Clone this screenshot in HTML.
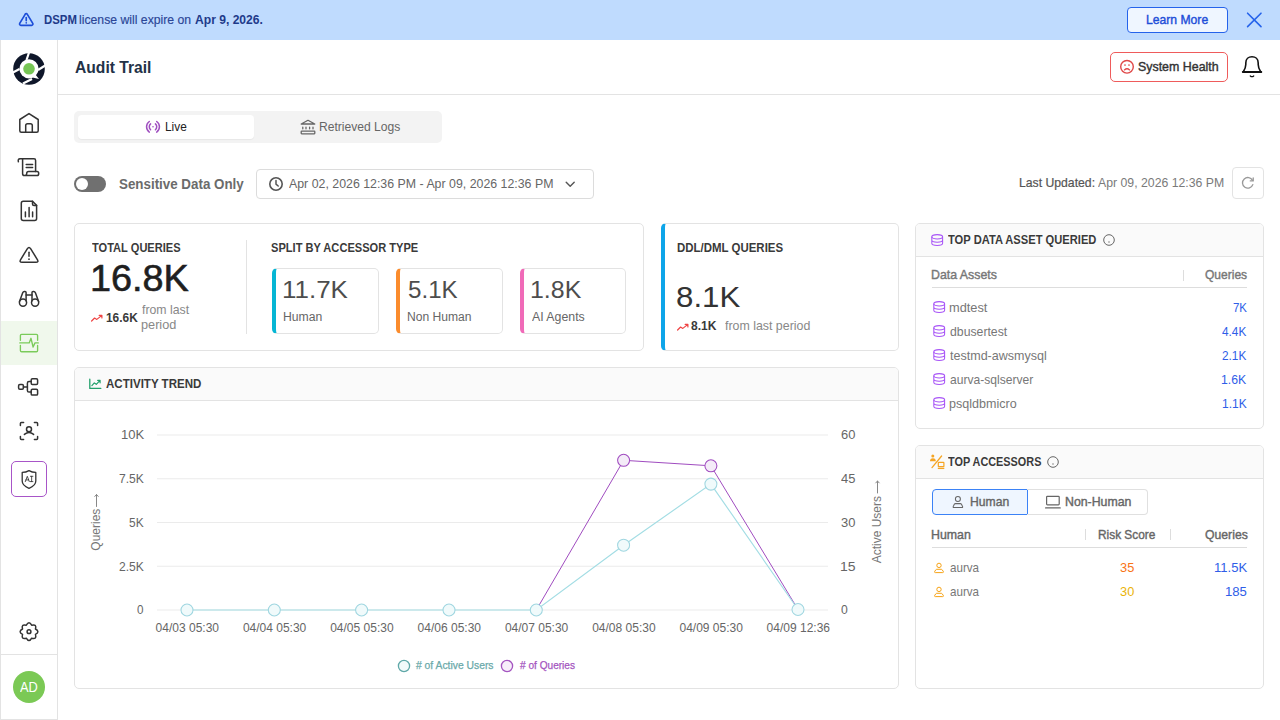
<!DOCTYPE html>
<html><head><meta charset="utf-8"><title>Audit Trail</title>
<style>
html,body{margin:0;padding:0;width:1280px;height:720px;overflow:hidden;background:#fff;}
body{position:relative;font-family:"Liberation Sans",sans-serif;}
.t{position:absolute;white-space:nowrap;transform-origin:0 0;}
.b{position:absolute;box-sizing:border-box;}
.s{position:absolute;overflow:visible;}
</style></head><body>
<div class="b" style="left:0px;top:0px;width:1280px;height:40px;background:#bfdbfe;"></div>
<div class="t" style="left:43.88px;top:13px;font-size:13px;line-height:13px;font-weight:700;color:#1e3a8a;transform:scaleX(0.8750);">DSPM</div>
<div class="t" style="left:79.31px;top:13px;font-size:13px;line-height:13px;font-weight:400;color:#2a4596;transform:scaleX(0.9407);-webkit-text-stroke:0.15px currentColor;">license will expire on</div>
<div class="t" style="left:195.00px;top:13px;font-size:13px;line-height:13px;font-weight:700;color:#1e3a8a;transform:scaleX(0.9306);">Apr 9, 2026.</div>
<div class="b" style="left:1127px;top:7px;width:101px;height:26px;background:#eff6ff;border:1px solid #2563eb;border-radius:4px;"></div>
<div class="t" style="left:1145.86px;top:13px;font-size:13px;line-height:13px;font-weight:400;color:#1d4ed8;transform:scaleX(0.9354);-webkit-text-stroke:0.4px currentColor;">Learn More</div>
<div class="b" style="left:0px;top:40px;width:58px;height:680px;border:1px solid #e3e3e3;border-top:none;background:#fff;"></div>
<svg class="s" style="left:13px;top:53px;" width="32" height="32" viewBox="0 0 32 32" fill="none"><circle cx="16" cy="16" r="15.8" fill="#0f172a"/>
<g stroke="#fff" stroke-width="2.2">
<path d="M13.5 7 L16.2 -1"/><path d="M25 17 L33 12"/><path d="M19 26 L10 30.5"/><path d="M6.5 16 L-1 20"/>
</g>
<circle cx="16" cy="15.8" r="9.6" fill="#fff"/>
<path d="M22 21 L26 26 L19.5 24.5 Z" fill="#fff"/>
<circle cx="16" cy="15.8" r="5.8" fill="#76c555"/></svg>
<div class="b" style="left:1px;top:321px;width:56px;height:44px;background:#f0f8ec;"></div>
<div class="b" style="left:11px;top:461px;width:36px;height:36px;border:1px solid #a855c8;border-radius:5px;"></div>
<div class="b" style="left:1px;top:654px;width:56px;height:1px;background:#e3e3e3;"></div>
<div class="b" style="left:13px;top:671px;width:32px;height:32px;border-radius:50%;background:#7bc955;"></div>
<div class="t" style="left:19.90px;top:680px;font-size:14px;line-height:14px;font-weight:400;color:#fff;transform:scaleX(0.9158);">AD</div>
<div class="b" style="left:58px;top:94px;width:1222px;height:1px;background:#e3e3e3;"></div>
<div class="t" style="left:75.00px;top:59px;font-size:17px;line-height:17px;font-weight:700;color:#233247;transform:scaleX(0.9195);">Audit Trail</div>
<div class="b" style="left:1110px;top:52px;width:118px;height:30px;border:1px solid #ef5b5b;border-radius:5px;"></div>
<div class="t" style="left:1138.45px;top:60px;font-size:13px;line-height:13px;font-weight:400;color:#333;transform:scaleX(0.9542);-webkit-text-stroke:0.4px currentColor;">System Health</div>
<div class="b" style="left:74px;top:111px;width:368px;height:32px;background:#f3f3f3;border-radius:5px;"></div>
<div class="b" style="left:78px;top:115px;width:176px;height:24px;background:#fff;border-radius:4px;box-shadow:0 1px 1px rgba(0,0,0,0.05);"></div>
<div class="t" style="left:164.59px;top:120px;font-size:13px;line-height:13px;font-weight:400;color:#222;transform:scaleX(0.9130);">Live</div>
<div class="t" style="left:319.07px;top:120px;font-size:13px;line-height:13px;font-weight:400;color:#666;transform:scaleX(0.9302);">Retrieved Logs</div>
<div class="b" style="left:74px;top:176px;width:32px;height:16px;background:#707070;border-radius:8px;"></div>
<div class="b" style="left:76px;top:178px;width:12px;height:12px;border-radius:50%;background:#fff;"></div>
<div class="t" style="left:118.60px;top:177px;font-size:14px;line-height:14px;font-weight:700;color:#6b6b6b;transform:scaleX(0.9542);">Sensitive Data Only</div>
<div class="b" style="left:256px;top:169px;width:338px;height:30px;border:1px solid #dcdcdc;border-radius:4px;"></div>
<div class="t" style="left:288.75px;top:177px;font-size:13px;line-height:13px;font-weight:400;color:#666;transform:scaleX(0.9505);">Apr 02, 2026 12:36 PM - Apr 09, 2026 12:36 PM</div>
<div class="t" style="left:1019.36px;top:176px;font-size:13px;line-height:13px;font-weight:400;color:#555;transform:scaleX(0.9392);-webkit-text-stroke:0.2px currentColor;">Last Updated:</div>
<div class="t" style="left:1098.00px;top:176px;font-size:13px;line-height:13px;font-weight:400;color:#7a7a7a;transform:scaleX(0.9444);">Apr 09, 2026 12:36 PM</div>
<div class="b" style="left:1232px;top:167px;width:32px;height:32px;border:1px solid #e3e3e3;border-radius:4px;"></div>
<div class="b" style="left:74px;top:223px;width:570px;height:128px;border:1px solid #e3e3e3;border-radius:5px;"></div>
<div class="t" style="left:91.80px;top:242px;font-size:12px;line-height:12px;font-weight:700;color:#3a3a3a;transform:scaleX(0.9229);">TOTAL QUERIES</div>
<div class="t" style="left:90.30px;top:261px;font-size:36px;line-height:36px;font-weight:400;color:#1f1f1f;transform:scaleX(1.0500);-webkit-text-stroke:0.6px currentColor;">16.8K</div>
<div class="t" style="left:105.60px;top:311px;font-size:13px;line-height:13px;font-weight:700;color:#3a3a3a;transform:scaleX(0.9143);">16.6K</div>
<div class="t" style="left:142.30px;top:303px;font-size:13px;line-height:13px;font-weight:400;color:#888;transform:scaleX(0.9440);">from last</div>
<div class="t" style="left:141.32px;top:318px;font-size:13px;line-height:13px;font-weight:400;color:#888;transform:scaleX(0.9771);">period</div>
<div class="b" style="left:246px;top:240px;width:1px;height:94px;background:#e3e3e3;"></div>
<div class="t" style="left:270.80px;top:242px;font-size:12px;line-height:12px;font-weight:700;color:#3a3a3a;transform:scaleX(0.9239);">SPLIT BY ACCESSOR TYPE</div>
<div class="b" style="left:272px;top:268px;width:107px;height:66px;border:1px solid #e3e3e3;border-left:4px solid #06b6d4;border-radius:5px;"></div>
<div class="t" style="left:281.84px;top:278px;font-size:24px;line-height:24px;font-weight:400;color:#4d4d4d;transform:scaleX(1.0814);">11.7K</div>
<div class="t" style="left:283.03px;top:311px;font-size:12.5px;line-height:12.5px;font-weight:400;color:#666;transform:scaleX(0.9744);">Human</div>
<div class="b" style="left:396px;top:268px;width:107px;height:66px;border:1px solid #e3e3e3;border-left:4px solid #fb8c2d;border-radius:5px;"></div>
<div class="t" style="left:407.69px;top:278px;font-size:24px;line-height:24px;font-weight:400;color:#4d4d4d;transform:scaleX(1.0063);">5.1K</div>
<div class="t" style="left:406.93px;top:311px;font-size:12.5px;line-height:12.5px;font-weight:400;color:#666;transform:scaleX(0.9677);">Non Human</div>
<div class="b" style="left:520px;top:268px;width:106px;height:66px;border:1px solid #e3e3e3;border-left:4px solid #f06ab8;border-radius:5px;"></div>
<div class="t" style="left:530.12px;top:278px;font-size:24px;line-height:24px;font-weight:400;color:#4d4d4d;transform:scaleX(1.0383);">1.8K</div>
<div class="t" style="left:531.80px;top:311px;font-size:12.5px;line-height:12.5px;font-weight:400;color:#666;transform:scaleX(0.9849);">AI Agents</div>
<div class="b" style="left:661px;top:223px;width:238px;height:128px;border:1px solid #e3e3e3;border-left:4px solid #0ea5e9;border-radius:5px;"></div>
<div class="t" style="left:677.00px;top:242px;font-size:12px;line-height:12px;font-weight:700;color:#3a3a3a;transform:scaleX(0.9550);">DDL/DML QUERIES</div>
<div class="t" style="left:676.46px;top:282px;font-size:30px;line-height:30px;font-weight:400;color:#333;transform:scaleX(1.0417);">8.1K</div>
<div class="t" style="left:690.60px;top:319px;font-size:13px;line-height:13px;font-weight:700;color:#3a3a3a;transform:scaleX(0.9259);">8.1K</div>
<div class="t" style="left:724.80px;top:319px;font-size:13px;line-height:13px;font-weight:400;color:#888;transform:scaleX(0.9517);">from last period</div>
<div class="b" style="left:74px;top:367px;width:825px;height:322px;border:1px solid #e3e3e3;border-radius:5px;overflow:hidden;"></div>
<div class="b" style="left:75px;top:368px;width:823px;height:33px;background:#fafafa;border-radius:4px 4px 0 0;"></div>
<div class="b" style="left:75px;top:400px;width:823px;height:1px;background:#e3e3e3;"></div>
<div class="t" style="left:105.60px;top:378px;font-size:12px;line-height:12px;font-weight:700;color:#3a3a3a;transform:scaleX(0.9626);">ACTIVITY TREND</div>
<svg class="s" style="left:0;top:0" width="1280" height="720"><line x1="157" y1="435" x2="828" y2="435" stroke="#ebebeb" stroke-width="1"/><line x1="157" y1="478.75" x2="828" y2="478.75" stroke="#ebebeb" stroke-width="1"/><line x1="157" y1="522.5" x2="828" y2="522.5" stroke="#ebebeb" stroke-width="1"/><line x1="157" y1="566.25" x2="828" y2="566.25" stroke="#ebebeb" stroke-width="1"/><line x1="157" y1="610" x2="828" y2="610" stroke="#ebebeb" stroke-width="1"/><polyline points="536.3,610 623.6,460.3 710.9,465.8 798,609.5" stroke="#a04cc0" stroke-width="1.0" fill="none"/><polyline points="187,610 274.3,610 361.6,610 449,610 536.3,610 623.6,545.2 710.9,484.1 798,609.5" stroke="#a3dde4" stroke-width="1.15" fill="none"/><circle cx="623.6" cy="460.3" r="6" fill="#f4ecf8" stroke="#a04cc0" stroke-width="1.05"/><circle cx="710.9" cy="465.8" r="6" fill="#f4ecf8" stroke="#a04cc0" stroke-width="1.05"/><circle cx="187" cy="610" r="6" fill="#f0fafb" stroke="#9fd6e0" stroke-width="1.05"/><circle cx="274.3" cy="610" r="6" fill="#f0fafb" stroke="#9fd6e0" stroke-width="1.05"/><circle cx="361.6" cy="610" r="6" fill="#f0fafb" stroke="#9fd6e0" stroke-width="1.05"/><circle cx="449" cy="610" r="6" fill="#f0fafb" stroke="#9fd6e0" stroke-width="1.05"/><circle cx="536.3" cy="610" r="6" fill="#f0fafb" stroke="#9fd6e0" stroke-width="1.05"/><circle cx="623.6" cy="545.2" r="6" fill="#f0fafb" stroke="#9fd6e0" stroke-width="1.05"/><circle cx="710.9" cy="484.1" r="6" fill="#f0fafb" stroke="#9fd6e0" stroke-width="1.05"/><circle cx="798" cy="609.5" r="6" fill="#f0fafb" stroke="#9fd6e0" stroke-width="1.05"/></svg>
<div class="t" style="left:121.12px;top:429px;font-size:12px;line-height:12px;font-weight:400;color:#666;transform:scaleX(1.0850);">10K</div>
<div class="t" style="left:118.70px;top:473px;font-size:12px;line-height:12px;font-weight:400;color:#666;transform:scaleX(1.0080);">7.5K</div>
<div class="t" style="left:129.00px;top:517px;font-size:12px;line-height:12px;font-weight:400;color:#666;transform:scaleX(0.9933);">5K</div>
<div class="t" style="left:118.70px;top:561px;font-size:12px;line-height:12px;font-weight:400;color:#666;transform:scaleX(1.0080);">2.5K</div>
<div class="t" style="left:137.10px;top:604px;font-size:12px;line-height:12px;font-weight:400;color:#666;transform:scaleX(0.9714);">0</div>
<div class="t" style="left:841.00px;top:429px;font-size:12px;line-height:12px;font-weight:400;color:#666;transform:scaleX(1.0769);">60</div>
<div class="t" style="left:841.00px;top:473px;font-size:12px;line-height:12px;font-weight:400;color:#666;transform:scaleX(1.0769);">45</div>
<div class="t" style="left:841.00px;top:517px;font-size:12px;line-height:12px;font-weight:400;color:#666;transform:scaleX(1.0769);">30</div>
<div class="t" style="left:839.83px;top:561px;font-size:12px;line-height:12px;font-weight:400;color:#666;transform:scaleX(1.1667);">15</div>
<div class="t" style="left:841.00px;top:604px;font-size:12px;line-height:12px;font-weight:400;color:#666;transform:scaleX(1.0143);">0</div>
<div class="t" style="left:155.60px;top:622px;font-size:12px;line-height:12px;font-weight:400;color:#666;">04/03 05:30</div>
<div class="t" style="left:242.90px;top:622px;font-size:12px;line-height:12px;font-weight:400;color:#666;">04/04 05:30</div>
<div class="t" style="left:330.20px;top:622px;font-size:12px;line-height:12px;font-weight:400;color:#666;">04/05 05:30</div>
<div class="t" style="left:417.60px;top:622px;font-size:12px;line-height:12px;font-weight:400;color:#666;">04/06 05:30</div>
<div class="t" style="left:504.90px;top:622px;font-size:12px;line-height:12px;font-weight:400;color:#666;">04/07 05:30</div>
<div class="t" style="left:592.20px;top:622px;font-size:12px;line-height:12px;font-weight:400;color:#666;">04/08 05:30</div>
<div class="t" style="left:679.50px;top:622px;font-size:12px;line-height:12px;font-weight:400;color:#666;">04/09 05:30</div>
<div class="t" style="left:766.60px;top:622px;font-size:12px;line-height:12px;font-weight:400;color:#666;">04/09 12:36</div>
<div class="t" style="left:46px;top:515px;width:100px;text-align:center;font-size:12px;line-height:14px;color:#777;transform:rotate(-90deg);transform-origin:50% 50%;">Queries <span style="display:inline-block;width:12px"></span></div>
<div class="t" style="left:827px;top:515px;width:100px;text-align:center;font-size:12px;line-height:14px;color:#777;transform:rotate(-90deg);transform-origin:50% 50%;">Active Users <span style="display:inline-block;width:12px"></span></div>
<svg class="s" style="left:397px;top:659px;" width="14" height="14" viewBox="0 0 14 14" fill="none"><circle cx="7" cy="7" r="5.6" fill="#f2fafa" stroke="#5fa8a8" stroke-width="1.3"/></svg>
<div class="t" style="left:415.80px;top:660px;font-size:11px;line-height:11px;font-weight:400;color:#6aa9a9;transform:scaleX(0.9390);-webkit-text-stroke:0.25px currentColor;"># of Active Users</div>
<svg class="s" style="left:500px;top:659px;" width="14" height="14" viewBox="0 0 14 14" fill="none"><circle cx="7" cy="7" r="5.6" fill="#f7eefa" stroke="#a455c0" stroke-width="1.3"/></svg>
<div class="t" style="left:519.70px;top:660px;font-size:11px;line-height:11px;font-weight:400;color:#a455c0;transform:scaleX(0.9183);-webkit-text-stroke:0.25px currentColor;"># of Queries</div>
<div class="b" style="left:915px;top:223px;width:349px;height:206px;border:1px solid #e3e3e3;border-radius:5px;"></div>
<div class="b" style="left:916px;top:224px;width:347px;height:32px;background:#fafafa;border-radius:4px 4px 0 0;"></div>
<div class="b" style="left:916px;top:256px;width:347px;height:1px;background:#e3e3e3;"></div>
<svg class="s" style="left:931px;top:234px" width="12" height="12" viewBox="0 0 12 12" fill="none"><ellipse cx="6.2" cy="2.8" rx="5.4" ry="2.2" stroke="#a855f7" stroke-width="1.05"/><path d="M0.8 2.8v6.4c0 1.2 2.4 2.2 5.4 2.2s5.4-1 5.4-2.2V2.8M0.8 6c0 1.2 2.4 2.2 5.4 2.2s5.4-1 5.4-2.2" stroke="#a855f7" stroke-width="1.05"/></svg>
<div class="t" style="left:948.40px;top:234px;font-size:12px;line-height:12px;font-weight:700;color:#3a3a3a;transform:scaleX(0.9300);">TOP DATA ASSET QUERIED</div>
<svg class="s" style="left:1103px;top:234px;" width="12" height="12" viewBox="0 0 12 12" fill="none"><circle cx="6" cy="6" r="5.3" stroke="#666" stroke-width="1"/><circle cx="6" cy="8" r="0.7" fill="#666"/></svg>
<div class="t" style="left:931.35px;top:268px;font-size:13px;line-height:13px;font-weight:400;color:#777;transform:scaleX(0.9500);-webkit-text-stroke:0.4px currentColor;">Data Assets</div>
<div class="b" style="left:1183px;top:270px;width:1px;height:11px;background:#ddd;"></div>
<div class="t" style="left:1205.00px;top:268px;font-size:13px;line-height:13px;font-weight:400;color:#777;transform:scaleX(0.9244);-webkit-text-stroke:0.4px currentColor;">Queries</div>
<div class="b" style="left:932px;top:287px;width:315px;height:1px;background:#ddd;"></div>
<svg class="s" style="left:932.8px;top:301px;" width="12" height="12" viewBox="0 0 12 12" fill="none"><ellipse cx="6.2" cy="2.8" rx="5.4" ry="2.2" stroke="#a855f7" stroke-width="1.05"/><path d="M0.8 2.8v6.4c0 1.2 2.4 2.2 5.4 2.2s5.4-1 5.4-2.2V2.8M0.8 6c0 1.2 2.4 2.2 5.4 2.2s5.4-1 5.4-2.2" stroke="#a855f7" stroke-width="1.05"/></svg>
<div class="t" style="left:949.42px;top:301px;font-size:13px;line-height:13px;font-weight:400;color:#777;transform:scaleX(0.9842);">mdtest</div>
<div class="t" style="left:1232.60px;top:301px;font-size:13px;line-height:13px;font-weight:400;color:#2f5ee8;transform:scaleX(0.8813);">7K</div>
<svg class="s" style="left:932.8px;top:325px;" width="12" height="12" viewBox="0 0 12 12" fill="none"><ellipse cx="6.2" cy="2.8" rx="5.4" ry="2.2" stroke="#a855f7" stroke-width="1.05"/><path d="M0.8 2.8v6.4c0 1.2 2.4 2.2 5.4 2.2s5.4-1 5.4-2.2V2.8M0.8 6c0 1.2 2.4 2.2 5.4 2.2s5.4-1 5.4-2.2" stroke="#a855f7" stroke-width="1.05"/></svg>
<div class="t" style="left:950.40px;top:325px;font-size:13px;line-height:13px;font-weight:400;color:#777;transform:scaleX(0.9426);">dbusertest</div>
<div class="t" style="left:1222.20px;top:325px;font-size:13px;line-height:13px;font-weight:400;color:#2f5ee8;transform:scaleX(0.9074);">4.4K</div>
<svg class="s" style="left:932.8px;top:349px;" width="12" height="12" viewBox="0 0 12 12" fill="none"><ellipse cx="6.2" cy="2.8" rx="5.4" ry="2.2" stroke="#a855f7" stroke-width="1.05"/><path d="M0.8 2.8v6.4c0 1.2 2.4 2.2 5.4 2.2s5.4-1 5.4-2.2V2.8M0.8 6c0 1.2 2.4 2.2 5.4 2.2s5.4-1 5.4-2.2" stroke="#a855f7" stroke-width="1.05"/></svg>
<div class="t" style="left:950.40px;top:349px;font-size:13px;line-height:13px;font-weight:400;color:#777;transform:scaleX(0.9640);">testmd-awsmysql</div>
<div class="t" style="left:1222.20px;top:349px;font-size:13px;line-height:13px;font-weight:400;color:#2f5ee8;transform:scaleX(0.9074);">2.1K</div>
<svg class="s" style="left:932.8px;top:373px;" width="12" height="12" viewBox="0 0 12 12" fill="none"><ellipse cx="6.2" cy="2.8" rx="5.4" ry="2.2" stroke="#a855f7" stroke-width="1.05"/><path d="M0.8 2.8v6.4c0 1.2 2.4 2.2 5.4 2.2s5.4-1 5.4-2.2V2.8M0.8 6c0 1.2 2.4 2.2 5.4 2.2s5.4-1 5.4-2.2" stroke="#a855f7" stroke-width="1.05"/></svg>
<div class="t" style="left:950.40px;top:373px;font-size:13px;line-height:13px;font-weight:400;color:#777;transform:scaleX(0.9289);">aurva-sqlserver</div>
<div class="t" style="left:1221.26px;top:373px;font-size:13px;line-height:13px;font-weight:400;color:#2f5ee8;transform:scaleX(0.9423);">1.6K</div>
<svg class="s" style="left:932.8px;top:397px;" width="12" height="12" viewBox="0 0 12 12" fill="none"><ellipse cx="6.2" cy="2.8" rx="5.4" ry="2.2" stroke="#a855f7" stroke-width="1.05"/><path d="M0.8 2.8v6.4c0 1.2 2.4 2.2 5.4 2.2s5.4-1 5.4-2.2V2.8M0.8 6c0 1.2 2.4 2.2 5.4 2.2s5.4-1 5.4-2.2" stroke="#a855f7" stroke-width="1.05"/></svg>
<div class="t" style="left:949.43px;top:397px;font-size:13px;line-height:13px;font-weight:400;color:#777;transform:scaleX(0.9652);">psqldbmicro</div>
<div class="t" style="left:1221.78px;top:397px;font-size:13px;line-height:13px;font-weight:400;color:#2f5ee8;transform:scaleX(0.9231);">1.1K</div>
<div class="b" style="left:915px;top:445px;width:349px;height:244px;border:1px solid #e3e3e3;border-radius:5px;"></div>
<div class="b" style="left:916px;top:446px;width:347px;height:32px;background:#fafafa;border-radius:4px 4px 0 0;"></div>
<div class="b" style="left:916px;top:478px;width:347px;height:1px;background:#e3e3e3;"></div>
<svg class="s" style="left:926px;top:450px" width="24" height="24" viewBox="0 0 24 24" fill="none"><circle cx="6.8" cy="6" r="1.5" fill="#f5a524"/><path d="M4 11.2 Q4 8.3 6.9 8.3 Q9.8 8.3 9.8 11.2 Z" fill="#f5a524"/><path d="M6 17.6 L15.6 6" stroke="#f5a524" stroke-width="1.3" stroke-linecap="round"/><rect x="12.3" y="12.4" width="5.6" height="4.3" rx="0.5" stroke="#f5a524" stroke-width="1.2"/><path d="M11.8 18.4 H18.3" stroke="#f5a524" stroke-width="1.3"/></svg>
<div class="t" style="left:948.40px;top:456px;font-size:12px;line-height:12px;font-weight:700;color:#3a3a3a;transform:scaleX(0.9058);">TOP ACCESSORS</div>
<svg class="s" style="left:1047px;top:456px;" width="12" height="12" viewBox="0 0 12 12" fill="none"><circle cx="6" cy="6" r="5.3" stroke="#666" stroke-width="1"/><circle cx="6" cy="8" r="0.7" fill="#666"/></svg>
<div class="b" style="left:932px;top:489px;width:96px;height:26px;background:#eff6ff;border:1px solid #3b82f6;border-radius:4px 0 0 4px;"></div>
<div class="b" style="left:1027px;top:489px;width:121px;height:26px;border:1px solid #e0e0e0;border-left:none;border-radius:0 4px 4px 0;"></div>
<div class="t" style="left:969.77px;top:495px;font-size:13px;line-height:13px;font-weight:400;color:#666;transform:scaleX(0.9341);-webkit-text-stroke:0.4px currentColor;">Human</div>
<div class="t" style="left:1064.85px;top:495px;font-size:13px;line-height:13px;font-weight:400;color:#666;transform:scaleX(0.9478);-webkit-text-stroke:0.4px currentColor;">Non-Human</div>
<div class="t" style="left:931.45px;top:528px;font-size:13px;line-height:13px;font-weight:400;color:#666;transform:scaleX(0.9512);-webkit-text-stroke:0.4px currentColor;">Human</div>
<div class="b" style="left:1085px;top:529px;width:1px;height:11px;background:#ddd;"></div>
<div class="t" style="left:1097.99px;top:528px;font-size:13px;line-height:13px;font-weight:400;color:#666;transform:scaleX(0.9129);-webkit-text-stroke:0.4px currentColor;">Risk Score</div>
<div class="b" style="left:1170px;top:529px;width:1px;height:11px;background:#ddd;"></div>
<div class="t" style="left:1204.50px;top:528px;font-size:13px;line-height:13px;font-weight:400;color:#666;transform:scaleX(0.9400);-webkit-text-stroke:0.4px currentColor;">Queries</div>
<div class="b" style="left:932px;top:547px;width:315px;height:1px;background:#ddd;"></div>
<div class="t" style="left:950.10px;top:561px;font-size:13px;line-height:13px;font-weight:400;color:#777;transform:scaleX(0.8939);">aurva</div>
<div class="t" style="left:1120.00px;top:561px;font-size:13px;line-height:13px;font-weight:400;color:#f97316;transform:scaleX(0.9857);">35</div>
<div class="t" style="left:1213.59px;top:561px;font-size:13px;line-height:13px;font-weight:400;color:#2f5ee8;transform:scaleX(1.0063);">11.5K</div>
<div class="t" style="left:950.10px;top:585px;font-size:13px;line-height:13px;font-weight:400;color:#777;transform:scaleX(0.8939);">aurva</div>
<div class="t" style="left:1120.00px;top:585px;font-size:13px;line-height:13px;font-weight:400;color:#eab308;transform:scaleX(0.9857);">30</div>
<div class="t" style="left:1224.59px;top:585px;font-size:13px;line-height:13px;font-weight:400;color:#2f5ee8;transform:scaleX(1.0095);">185</div>
<svg class="s" style="left:0;top:0" width="1280" height="720"><g transform="translate(18.2 11.9) scale(0.67)" stroke="#1d4ed8" stroke-width="2.5" fill="none" stroke-linecap="round" stroke-linejoin="round"><path d="M10.363 3.591l-8.106 13.534a1.914 1.914 0 0 0 1.636 2.871h16.214a1.914 1.914 0 0 0 1.636 -2.87l-8.106 -13.536a1.914 1.914 0 0 0 -3.274 0z"/><path d="M12 8.5v4.5"/><path d="M12 16.3h.01"/></g><path d="M1247.6 13.2 L1261 26.6 M1261 13.2 L1247.6 26.6" stroke="#2563eb" stroke-width="1.6" fill="none" stroke-linecap="round" stroke-linejoin="round" /><path d="M19.8 119.5 L29 113.6 L38.2 119.5 V130.8 Q38.2 132.3 36.7 132.3 H21.3 Q19.8 132.3 19.8 130.8 Z" stroke="#333" stroke-width="1.5" fill="none" stroke-linecap="round" stroke-linejoin="round" /><path d="M25.7 132.3 V125.6 Q25.7 123.8 27.5 123.8 H30.5 Q32.3 123.8 32.3 125.6 V132.3" stroke="#333" stroke-width="1.5" fill="none" stroke-linecap="round" stroke-linejoin="round" /><path d="M18.4 161.8 Q17.6 158.8 20 158.8 H34 Q35.6 158.8 35.6 160.4 V171.4" stroke="#333" stroke-width="1.5" fill="none" stroke-linecap="round" stroke-linejoin="round" /><path d="M22.6 159 V173.8 Q22.6 175.6 24.5 175.6 H37 Q38.7 175.6 38.7 173.5 Q38.7 171.4 37 171.4 H28.6 Q26.7 171.4 26.7 173.5 Q26.7 175.6 24.8 175.6" stroke="#333" stroke-width="1.5" fill="none" stroke-linecap="round" stroke-linejoin="round" /><path d="M26.2 164.5 H32.6 M26.2 167.5 H32.6" stroke="#333" stroke-width="1.5" fill="none" stroke-linecap="round" stroke-linejoin="round" /><path d="M32.5 201.3 H23.3 Q21.3 201.3 21.3 203.3 V218.5 Q21.3 220.5 23.3 220.5 H34.6 Q36.6 220.5 36.6 218.5 V205.4 Z" stroke="#333" stroke-width="1.5" fill="none" stroke-linecap="round" stroke-linejoin="round" /><path d="M32.5 201.3 V203.9 Q32.5 205.4 34 205.4 H36.6" stroke="#333" stroke-width="1.5" fill="none" stroke-linecap="round" stroke-linejoin="round" /><path d="M25.4 212 V216.8 M29.1 207.5 V216.8 M32.6 212 V216.8" stroke="#333" stroke-width="1.5" fill="none" stroke-linecap="round" stroke-linejoin="round" /><path d="M27.4 248.6 Q29 246.2 30.6 248.6 L37.5 259.8 Q38.8 262.3 36 262.3 H22 Q19.2 262.3 20.5 259.8 Z" stroke="#333" stroke-width="1.5" fill="none" stroke-linecap="round" stroke-linejoin="round" /><path d="M29 252.2 V256.3" stroke="#333" stroke-width="1.5" fill="none" stroke-linecap="round" stroke-linejoin="round" /><circle cx="29" cy="259.2" r="0.85" fill="#333"/><circle cx="23" cy="302.6" r="3.6" stroke="#333" stroke-width="1.5" fill="none"/><circle cx="35.1" cy="302.6" r="3.6" stroke="#333" stroke-width="1.5" fill="none"/><path d="M19.5 301.5 L22.7 292.8 Q23.2 291.5 24.4 291.5 H25 Q26.1 291.5 26.1 292.6 V301" stroke="#333" stroke-width="1.5" fill="none" stroke-linecap="round" stroke-linejoin="round" /><path d="M38.6 301.5 L35.4 292.8 Q34.9 291.5 33.7 291.5 H33.1 Q32 291.5 32 292.6 V301" stroke="#333" stroke-width="1.5" fill="none" stroke-linecap="round" stroke-linejoin="round" /><path d="M26.1 295 H32" stroke="#333" stroke-width="1.5" fill="none" stroke-linecap="round" stroke-linejoin="round" /><path d="M20.4 340.3 V335.5 Q20.4 334.3 21.6 334.3 H36.4 Q37.6 334.3 37.6 335.5 V340.3" stroke="#7acb5a" stroke-width="1.35" fill="none" stroke-linecap="round" stroke-linejoin="round" /><path d="M20.4 345.5 V350.5 Q20.4 351.7 21.6 351.7 H36.4 Q37.6 351.7 37.6 350.5 V345.5" stroke="#7acb5a" stroke-width="1.35" fill="none" stroke-linecap="round" stroke-linejoin="round" /><path d="M19.8 342.9 H29.2 L31 338.3 L33.1 347 L35 342.9 H38.3" stroke="#7acb5a" stroke-width="1.35" fill="none" stroke-linecap="round" stroke-linejoin="round" /><rect x="18.6" y="384.5" width="4.8" height="4.8" rx="1.2" stroke="#333" stroke-width="1.5" fill="none"/><path d="M23.4 386.9 H27.4" stroke="#333" stroke-width="1.5" fill="none" stroke-linecap="round" stroke-linejoin="round" /><path d="M31.2 381.6 H29 Q27.4 381.6 27.4 383.2 V390.4 Q27.4 392 29 392 H31.2" stroke="#333" stroke-width="1.5" fill="none" stroke-linecap="round" stroke-linejoin="round" /><rect x="31.2" y="378.7" width="6.4" height="5.8" rx="1.2" stroke="#333" stroke-width="1.5" fill="none"/><rect x="31.2" y="389.3" width="6.4" height="5.8" rx="1.2" stroke="#333" stroke-width="1.5" fill="none"/><path d="M20.4 425.6 V423.6 Q20.4 422.6 21.4 422.6 H23.6 M34.4 422.6 H36.6 Q37.6 422.6 37.6 423.6 V425.6 M20.4 436.5 V438.6 Q20.4 439.6 21.4 439.6 H23.6 M34.4 439.6 H36.6 Q37.6 439.6 37.6 438.6 V436.5" stroke="#333" stroke-width="1.5" fill="none" stroke-linecap="round" stroke-linejoin="round" /><circle cx="29" cy="429.3" r="2.5" stroke="#333" stroke-width="1.5" fill="none"/><path d="M24.4 434.4 Q29 430.6 33.6 434.4" stroke="#333" stroke-width="1.5" fill="none" stroke-linecap="round" stroke-linejoin="round" /><path d="M29 470.6 Q26 472.4 22.2 472.4 V481 Q22.2 485.6 29 488.3 Q35.8 485.6 35.8 481 V472.4 Q32 472.4 29 470.6 Z" stroke="#333" stroke-width="1.3" fill="none" stroke-linecap="round" stroke-linejoin="round" /><path d="M25.3 481.6 L27.3 476.3 L29.3 481.6 M25.9 479.9 H28.7" stroke="#333" stroke-width="0.85" fill="none" stroke-linecap="round" stroke-linejoin="round" /><path d="M30.4 476.3 H32.9 M31.65 476.3 V481.6 M30.4 481.6 H32.9" stroke="#333" stroke-width="0.85" fill="none" stroke-linecap="round" stroke-linejoin="round" /><path d="M26.32 625.23 Q29.00 620.40 31.68 625.23 Q36.99 623.71 35.47 629.02 Q40.30 631.70 35.47 634.38 Q36.99 639.69 31.68 638.17 Q29.00 643.00 26.32 638.17 Q21.01 639.69 22.53 634.38 Q17.70 631.70 22.53 629.02 Q21.01 623.71 26.32 625.23 Z" stroke="#333" stroke-width="1.5" fill="none" stroke-linecap="round" stroke-linejoin="round" /><circle cx="29" cy="631.7" r="1.9" stroke="#333" stroke-width="1.5" fill="none"/><circle cx="1127" cy="66.8" r="6.3" stroke="#e04848" stroke-width="1.4" fill="none"/><circle cx="1125" cy="65" r="0.85" fill="#e04848"/><circle cx="1129" cy="65" r="0.85" fill="#e04848"/><path d="M1124.4 69.9 Q1127 67.6 1129.6 69.9" stroke="#e04848" stroke-width="1.3" fill="none" stroke-linecap="round" stroke-linejoin="round" /><path d="M1243.2 72 Q1245.8 68 1245.8 64.5 V63 C1245.8 59 1248.5 56.8 1252 56.8 C1255.5 56.8 1258.2 59 1258.2 63 V64.5 Q1258.2 68 1260.8 72 Z" stroke="#111" stroke-width="1.6" fill="none" stroke-linecap="round" stroke-linejoin="round" /><path d="M1242.8 72 H1261.3" stroke="#111" stroke-width="1.9" fill="none" stroke-linecap="round" stroke-linejoin="round" /><path d="M1250.3 75.9 Q1252 77.3 1253.7 75.9" stroke="#111" stroke-width="1.3" fill="none" stroke-linecap="round" stroke-linejoin="round" /><path d="M149.3 121.5 A6.5 6.5 0 0 0 149.3 132.1 M156.7 121.5 A6.5 6.5 0 0 1 156.7 132.1" stroke="#a050c0" stroke-width="1.5" fill="none" stroke-linecap="round" stroke-linejoin="round" /><path d="M150.6 123.9 A3.8 3.8 0 0 0 150.6 129.7 M155.4 123.9 A3.8 3.8 0 0 1 155.4 129.7" stroke="#a050c0" stroke-width="1.5" fill="none" stroke-linecap="round" stroke-linejoin="round" /><circle cx="153" cy="126.8" r="0.8" fill="#a050c0"/><path d="M301.2 124 L308 120.3 L314.8 124 Z" stroke="#666" stroke-width="1.3" fill="none" stroke-linecap="round" stroke-linejoin="round" /><path d="M302.8 127.2 V128.8 M306 127.2 V128.8 M309.6 127.2 V128.8 M313 127.2 V128.8" stroke="#666" stroke-width="1.3" fill="none" stroke-linecap="round" stroke-linejoin="round" /><rect x="301.2" y="131.2" width="13.6" height="2.6" rx="0.5" stroke="#666" stroke-width="1.3" fill="none"/><circle cx="276" cy="184" r="6.2" stroke="#555" stroke-width="1.6" fill="none"/><path d="M276 180.6 V184.2 L278.2 186" stroke="#555" stroke-width="1.5" fill="none" stroke-linecap="round" stroke-linejoin="round" /><path d="M566.2 182.2 L570.2 186.3 L574.2 182.2" stroke="#555" stroke-width="1.4" fill="none" stroke-linecap="round" stroke-linejoin="round" /><path d="M1252.5 180.4 A5.3 5.3 0 1 0 1252.8 184.6" stroke="#999" stroke-width="1.35" fill="none" stroke-linecap="round" stroke-linejoin="round" /><path d="M1253.2 178 V180.9 H1250.3" stroke="#999" stroke-width="1.35" fill="none" stroke-linecap="round" stroke-linejoin="round" /><path d="M91.6 321 L94.6 318 L96.8 319.4 L101.6 315.6 M99.2 315.4 H101.9 V318" stroke="#ef4444" stroke-width="1.2" fill="none" stroke-linecap="round" stroke-linejoin="round" /><path d="M677.6 330 L680.6 327 L682.8 328.4 L687.6 324.6 M685.2 324.4 H687.9 V327" stroke="#ef4444" stroke-width="1.2" fill="none" stroke-linecap="round" stroke-linejoin="round" /><path d="M89.8 379.2 V388.4 H100.8" stroke="#22a06b" stroke-width="1.3" fill="none" stroke-linecap="round" stroke-linejoin="round" /><path d="M91.9 385.6 L94.3 382.9 L96.3 384.3 L99.8 380.7 M97.7 380.4 H100.1 V382.8" stroke="#22a06b" stroke-width="1.2" fill="none" stroke-linecap="round" stroke-linejoin="round" /><path d="M96.5 506.5 V494.5 M94.8 496.4 L96.5 494.5 L98.2 496.4" stroke="#888" stroke-width="1.0" fill="none" stroke-linecap="round" stroke-linejoin="round" /><path d="M877.5 493 V481 M875.8 482.9 L877.5 481 L879.2 482.9" stroke="#888" stroke-width="1.0" fill="none" stroke-linecap="round" stroke-linejoin="round" /><circle cx="957.9" cy="498.9" r="2.5" stroke="#666" stroke-width="1.05" fill="none"/><path d="M953.6 507.5 Q953.0 507.5 953.2 506.6 L954.3 504.20000000000005 Q954.7 503.6 955.5 503.6 H960.3 Q961.0999999999999 503.6 961.5 504.20000000000005 L962.5999999999999 506.6 Q962.8 507.5 962.1999999999999 507.5 Z" stroke="#666" stroke-width="1.05" fill="none" stroke-linecap="round" stroke-linejoin="round" /><circle cx="939" cy="565.4" r="2.2" stroke="#f59e0b" stroke-width="0.95" fill="none"/><path d="M935.0 572.6 Q934.4 572.6 934.6 571.7 L935.6999999999999 569.9 Q936.1 569.3 936.9 569.3 H941.1 Q941.9 569.3 942.3000000000001 569.9 L943.4 571.7 Q943.6 572.6 943.0 572.6 Z" stroke="#f59e0b" stroke-width="0.95" fill="none" stroke-linecap="round" stroke-linejoin="round" /><circle cx="939" cy="589.4" r="2.2" stroke="#f59e0b" stroke-width="0.95" fill="none"/><path d="M935.0 596.6 Q934.4 596.6 934.6 595.7 L935.6999999999999 593.9 Q936.1 593.3 936.9 593.3 H941.1 Q941.9 593.3 942.3000000000001 593.9 L943.4 595.7 Q943.6 596.6 943.0 596.6 Z" stroke="#f59e0b" stroke-width="0.95" fill="none" stroke-linecap="round" stroke-linejoin="round" /><rect x="1046.6" y="496.3" width="12.6" height="8.6" rx="0.8" stroke="#666" stroke-width="1.2" fill="none"/><path d="M1045.6 507.9 H1060.2" stroke="#666" stroke-width="1.3" fill="none" stroke-linecap="round" stroke-linejoin="round" /></svg>
</body></html>
